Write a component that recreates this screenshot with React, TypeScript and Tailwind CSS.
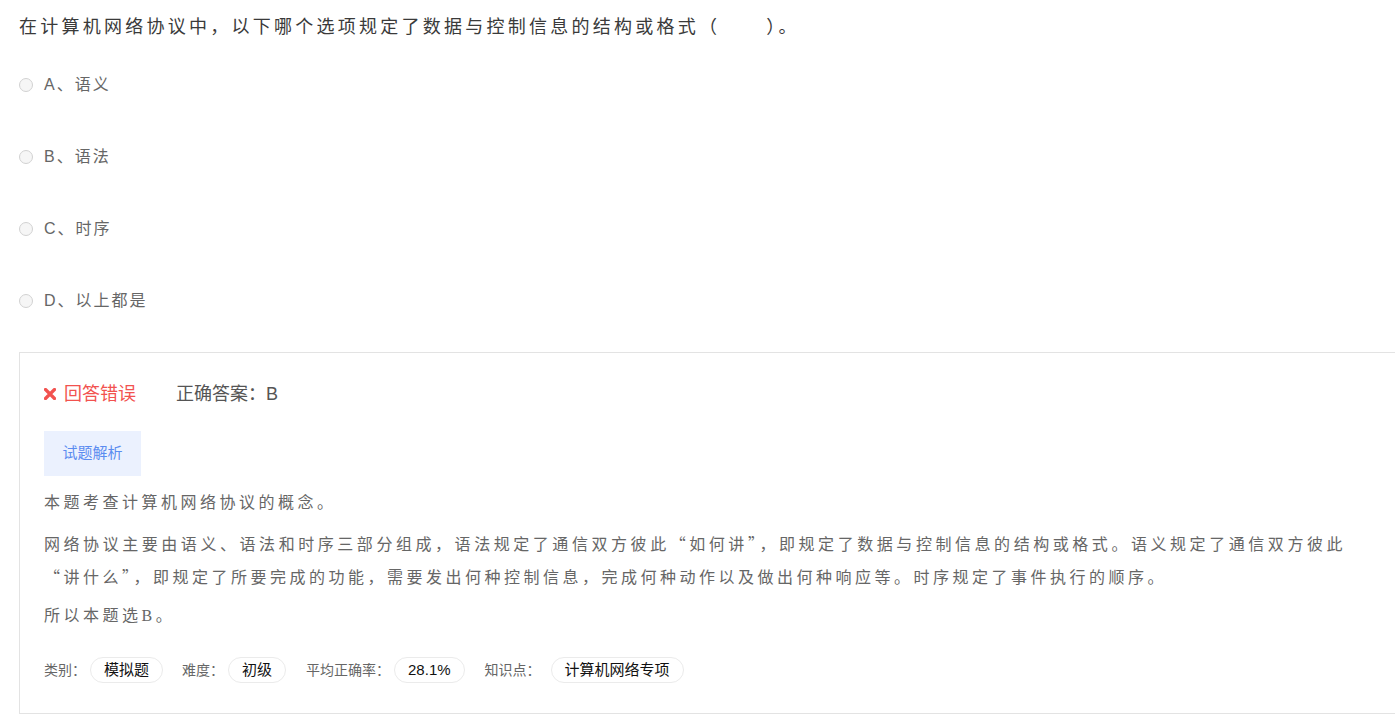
import React from "react";

const CJK = { fontFamily: '"Liberation Sans", "Noto Sans CJK SC", sans-serif' };
const CJKFIRST = { fontFamily: '"Noto Sans CJK SC", "Liberation Sans", sans-serif' };

function Radio() {
  return (
    <span className="inline-block w-[14px] h-[14px] rounded-full border border-[#d2d2d2] bg-[#f6f6f6] shrink-0" />
  );
}

function Option({ letter, text }: { letter: string; text: string }) {
  return (
    <div className="flex items-center h-[24px]">
      <Radio />
      <span className="ml-[11px] text-[16px] leading-[24px] text-[#666] tracking-[2px]">
        {letter}、{text}
      </span>
    </div>
  );
}

function Pill({ children, extra }: { children: React.ReactNode; extra?: boolean }) {
  return (
    <span
      className={
        extra
          ? "ml-[10px] inline-flex items-center h-[26px] px-[13px] rounded-full border border-[#ebebeb] text-[15px] text-[#111]"
          : "ml-[4px] inline-flex items-center h-[26px] px-[13px] rounded-full border border-[#ebebeb] text-[15px] text-[#111]"
      }
    >
      {children}
    </span>
  );
}

export default function App() {
  return (
    <div className="bg-white w-full min-h-[726px]" style={CJK}>
      <div className="pl-[19px]">
        <div className="pt-[12px] text-[18px] leading-[30px] text-[#3a3a3a] tracking-[3.25px]">
          在计算机网络协议中，以下哪个选项规定了数据与控制信息的结构或格式（{"\u3000\u00a0\u00a0\u00a0"}）。
        </div>
        <div className="mt-[31px] flex flex-col gap-[48px]">
          <Option letter="A" text="语义" />
          <Option letter="B" text="语法" />
          <Option letter="C" text="时序" />
          <Option letter="D" text="以上都是" />
        </div>
        <div className="mt-[39px] border-t border-l border-b border-[#e3e3e3] pl-[24px] pt-[29px] pb-[30px]">
          <div className="flex items-center h-[24px]">
            <svg width="12" height="12" viewBox="0 0 12 12" className="shrink-0">
              <path d="M1.5 1.5 L10.5 10.5 M10.5 1.5 L1.5 10.5" stroke="#f2524f" strokeWidth="3.2" strokeLinecap="round" />
            </svg>
            <span className="ml-[8px] text-[18px] text-[#f2524f]">回答错误</span>
            <span className="ml-[40px] text-[18px] text-[#555]">正确答案：B</span>
          </div>
          <div className="mt-[25px] w-[97px] h-[45px] flex items-center justify-center bg-[#ebf1fe] text-[15px] text-[#5b8cf0]">
            试题解析
          </div>
          <div
            className="w-[1302px] text-[16px] text-[#666] tracking-[3.5px] text-justify leading-[33px]"
            style={CJKFIRST}
          >
            <p className="mt-[9px]">本题考查计算机网络协议的概念。</p>
            <p className="mt-[9px]">
              网络协议主要由语义、语法和时序三部分组成，语法规定了通信双方彼此“如何讲”，即规定了数据与控制信息的结构或格式。语义规定了通信双方彼此<wbr />“讲什么”，即规定了所要完成的功能，需要发出何种控制信息，完成何种动作以及做出何种响应等。时序规定了事件执行的顺序。
            </p>
            <p className="mt-[5px]">
              所以本题选<span style={{ fontFamily: '"Liberation Serif", serif' }}>B</span>。
            </p>
          </div>
          <div className="mt-[25px] flex items-center text-[14px] text-[#666]">
            <span>类别：</span>
            <Pill>模拟题</Pill>
            <span className="ml-[19px]">难度：</span>
            <Pill>初级</Pill>
            <span className="ml-[20px]">平均正确率：</span>
            <Pill>28.1%</Pill>
            <span className="ml-[20px]">知识点：</span>
            <Pill extra>计算机网络专项</Pill>
          </div>
        </div>
      </div>
    </div>
  );
}
